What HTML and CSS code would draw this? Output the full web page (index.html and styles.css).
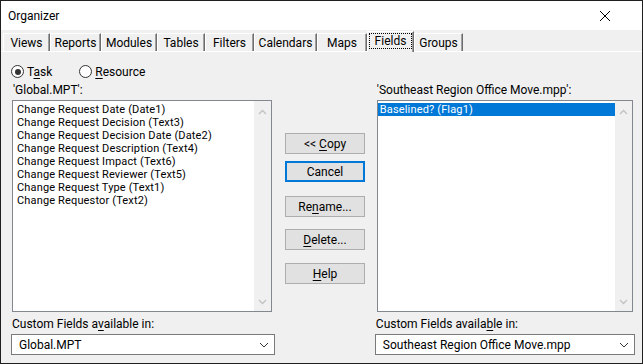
FILE: index.html
```html
<!DOCTYPE html>
<html lang="en">
<head>
    <meta charset="UTF-8">
    <title>Organizer</title>
    <link rel="stylesheet" href="styles.css">
</head>
<body>
    <div class="window">
        <div class="titlebar">
            <span class="title">Organizer</span>
            <svg class="close" width="12" height="12" viewBox="0 0 12 12">
                <path d="M1 1 L11 11 M11 1 L1 11" stroke="#000" stroke-width="1"/>
            </svg>
        </div>

        <div class="tabs">
            <div class="tab w-views">Views</div>
            <div class="tab w-reports">Reports</div>
            <div class="tab w-modules">Modules</div>
            <div class="tab w-tables">Tables</div>
            <div class="tab w-filters">Filters</div>
            <div class="tab w-calendars">Calendars</div>
            <div class="tab w-maps">Maps</div>
            <div class="tab active w-fields"><span class="focus">Fields</span></div>
            <div class="tab w-groups">Groups</div>
        </div>

        <div class="panel">
            <div class="radios">
                <label class="radio"><span class="dot checked"></span><span>T<u>a</u>sk</span></label>
                <label class="radio"><span class="dot"></span><span><u>R</u>esource</span></label>
            </div>

            <div class="columns">
                <div class="side left">
                    <div class="caption">'Global.MPT':</div>
                    <div class="listbox">
                        <ul class="items">
                            <li>Change Request Date (Date1)</li>
                            <li>Change Request Decision (Text3)</li>
                            <li>Change Request Decision Date (Date2)</li>
                            <li>Change Request Description (Text4)</li>
                            <li>Change Request Impact (Text6)</li>
                            <li>Change Request Reviewer (Text5)</li>
                            <li>Change Request Type (Text1)</li>
                            <li>Change Requestor (Text2)</li>
                        </ul>
                        <div class="scrollbar">
                            <svg width="9" height="6" viewBox="0 0 9 6"><path d="M1 5 L4.5 1.5 L8 5" fill="none" stroke="#c2c2c2" stroke-width="1.3"/></svg>
                            <svg width="9" height="6" viewBox="0 0 9 6"><path d="M1 1 L4.5 4.5 L8 1" fill="none" stroke="#c2c2c2" stroke-width="1.3"/></svg>
                        </div>
                    </div>
                    <div class="caption lower">Custom Fields a<u>v</u>ailable in:</div>
                    <div class="combo">
                        <span>Global.MPT</span>
                        <svg width="10" height="6" viewBox="0 0 10 6"><path d="M1 1 L5 5 L9 1" fill="none" stroke="#333" stroke-width="1"/></svg>
                    </div>
                </div>

                <div class="buttons">
                    <button class="btn b-copy">&lt;&lt; <u>C</u>opy</button>
                    <button class="btn default b-cancel">Cancel</button>
                    <button class="btn b-rename">Re<u>n</u>ame...</button>
                    <button class="btn b-delete"><u>D</u>elete...</button>
                    <button class="btn b-help"><u>H</u>elp</button>
                </div>

                <div class="side right">
                    <div class="caption">'Southeast Region Office Move.mpp':</div>
                    <div class="listbox">
                        <ul class="items">
                            <li class="selected">Baselined? (Flag1)</li>
                        </ul>
                        <div class="scrollbar">
                            <svg width="9" height="6" viewBox="0 0 9 6"><path d="M1 5 L4.5 1.5 L8 5" fill="none" stroke="#c2c2c2" stroke-width="1.3"/></svg>
                            <svg width="9" height="6" viewBox="0 0 9 6"><path d="M1 1 L4.5 4.5 L8 1" fill="none" stroke="#c2c2c2" stroke-width="1.3"/></svg>
                        </div>
                    </div>
                    <div class="caption lower">Custom Fields availa<u>b</u>le in:</div>
                    <div class="combo">
                        <span>Southeast Region Office Move.mpp</span>
                        <svg width="10" height="6" viewBox="0 0 10 6"><path d="M1 1 L5 5 L9 1" fill="none" stroke="#333" stroke-width="1"/></svg>
                    </div>
                </div>
            </div>
        </div>
    </div>
</body>
</html>
```

FILE: styles.css
```css
body {
    margin: 0;
    font-family: Roboto, "Noto Sans", Arial, sans-serif;
    font-size: 12px;
    color: #000;
    background-color: #fff;
}

u {
    text-decoration: underline;
    text-underline-offset: 2px;
}

.window {
    width: 643px;
    height: 364px;
    box-sizing: border-box;
    border: 1px solid #1f1f1f;
    background-color: #f0f0f0;
    display: flex;
    flex-direction: column;
}

.titlebar {
    height: 29px;
    background-color: #fff;
    display: flex;
    align-items: center;
    justify-content: space-between;
    padding: 0 31px 0 7px;
    flex-shrink: 0;
}

.title {
    font-size: 12px;
}

/* tab strip */
.tabs {
    display: flex;
    align-items: flex-end;
    height: 21px;
    padding-left: 2px;
    border-bottom: 1px solid #fff;
    font-size: 12px;
}

.tab {
    height: 18px;
    box-sizing: border-box;
    border-top: 1px solid #fff;
    border-left: 1px solid #fff;
    border-right: 1px solid #6d6d6d;
    box-shadow: inset -1px 0 0 #a0a0a0;
    display: flex;
    align-items: center;
    justify-content: center;
    padding-top: 1px;
}

.tab.active {
    height: 21px;
    align-items: flex-start;
    padding-top: 1px;
    margin-bottom: -1px;
    background-color: #f0f0f0;
}

.focus {
    border: 1px dotted #000;
    padding: 0 5px;
    line-height: 14px;
}

.w-views { width: 47px; }
.w-reports { width: 51px; }
.w-modules { width: 56px; }
.w-tables { width: 48px; }
.w-filters { width: 49px; }
.w-calendars { width: 63px; }
.w-maps { width: 50px; }
.w-fields { width: 47px; }
.w-groups { width: 49px; }

/* dialog body */
.panel {
    padding: 12px 7px 0 10px;
}

.radios {
    display: flex;
    gap: 27px;
    height: 15px;
    align-items: center;
}

.radio {
    display: flex;
    align-items: center;
    gap: 3px;
}

.dot {
    width: 11px;
    height: 11px;
    border: 1px solid #333;
    border-radius: 50%;
    background-color: #fff;
    position: relative;
}

.dot.checked::after {
    content: "";
    position: absolute;
    left: 2.5px;
    top: 2.5px;
    width: 6px;
    height: 6px;
    border-radius: 50%;
    background-color: #333;
}

.columns {
    display: flex;
    margin-top: 1px;
}

.side {
    display: flex;
    flex-direction: column;
}

.side.left {
    width: 265px;
}

.side.right {
    width: 261px;
}

.caption {
    height: 20px;
    line-height: 20px;
    padding-left: 2px;
}

.caption.lower {
    height: 22px;
    line-height: 24px;
    padding-left: 1px;
}

.listbox {
    height: 212px;
    box-sizing: border-box;
    border: 1px solid #828790;
    background-color: #fff;
    display: flex;
    margin-left: 1px;
    margin-right: 3px;
}

.right .listbox {
    margin-left: 2px;
    margin-right: 2px;
}

.items {
    list-style: none;
    margin: 0;
    padding: 2px 0 0;
    flex: 1;
    font-size: 11px;
    letter-spacing: 0.15px;
}

.items li {
    height: 13px;
    line-height: 13px;
    padding-left: 4px;
    white-space: nowrap;
}

.items li.selected {
    background-color: #0078d7;
    color: #fff;
    padding-left: 2px;
}

.scrollbar {
    width: 17px;
    background-color: #f0f0f0;
    display: flex;
    flex-direction: column;
    justify-content: space-between;
    align-items: center;
    padding: 8px 0 6px;
}

.combo {
    height: 21px;
    box-sizing: border-box;
    border: 1px solid #7a7a7a;
    background-color: #fff;
    display: flex;
    align-items: center;
    justify-content: space-between;
    padding: 0 5px 0 7px;
}

/* middle buttons */
.buttons {
    width: 100px;
    display: flex;
    flex-direction: column;
    align-items: center;
    padding-top: 53px;
}

.btn {
    width: 80px;
    height: 21px;
    box-sizing: border-box;
    border: 1px solid #adadad;
    background-color: #e1e1e1;
    font-family: inherit;
    font-size: 12px;
    color: #000;
    padding: 0;
}

.btn.default {
    border: 2px solid #0078d7;
}

.b-cancel { margin-top: 7px; }
.b-rename { margin-top: 14px; }
.b-delete { margin-top: 12px; }
.b-help { margin-top: 13px; }
```
